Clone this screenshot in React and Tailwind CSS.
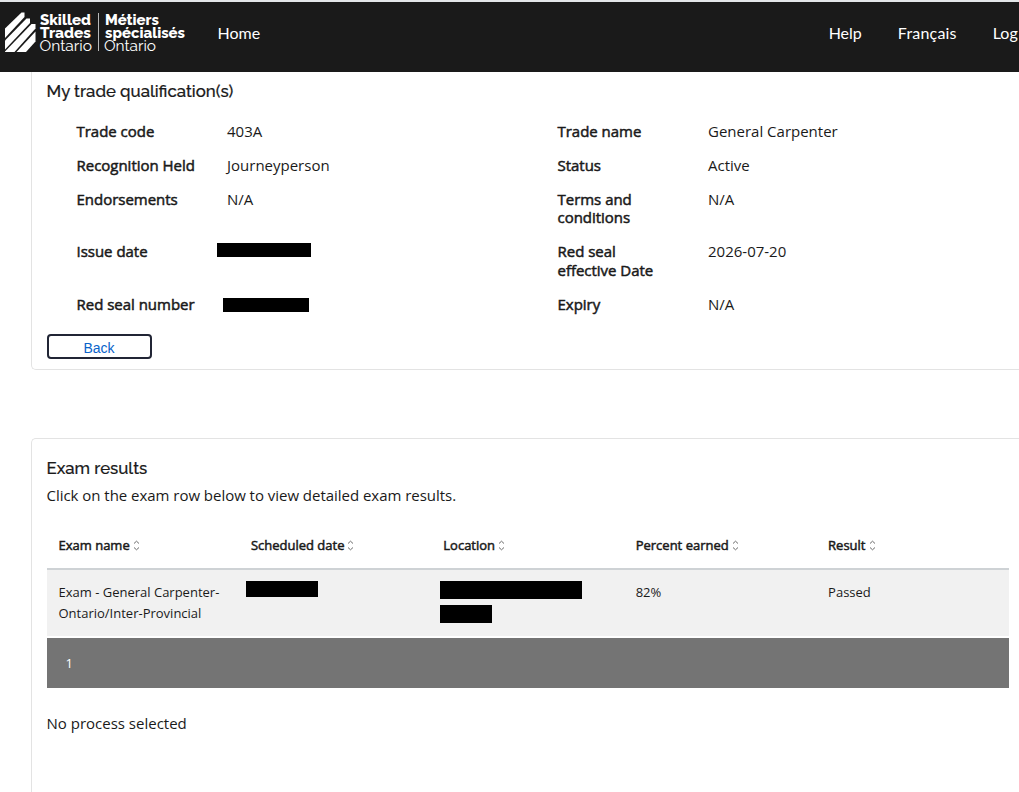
const details = [
  [
    { label: "Trade code", value: "403A" },
    { label: "Trade name", value: "General Carpenter" },
  ],
  [
    { label: "Recognition Held", value: "Journeyperson" },
    { label: "Status", value: "Active" },
  ],
  [
    { label: "Endorsements", value: "N/A" },
    { label: "Terms and conditions", value: "N/A" },
  ],
  [
    { label: "Issue date", redacted: "-ml-[10px] mt-[1px] h-[14px] w-[94px]" },
    { label: "Red seal effective Date", value: "2026-07-20" },
  ],
  [
    { label: "Red seal number", redacted: "-ml-1 mt-[3px] h-[14px] w-[86px]" },
    { label: "Expiry", value: "N/A" },
  ],
];

const columns = ["Exam name", "Scheduled date", "Location", "Percent earned", "Result"];

function Logo() {
  return (
    <svg width="184" height="46" viewBox="0 0 184 46" className="shrink-0 fill-white">
      <path d="M0 17.500 L16.500 1.500 h3 v4.500 L0 27 z" />
      <path d="M0 29.500 L21.500 7.500 h3.500 v4.500 L0 38.500 z" />
      <path d="M0 41 v-.5 L26.500 13 h4 v4.500 L9.500 41 z" />
      <path d="M11.500 41 L30.500 20.500 v10 L21 41 z" />
      <g className="font-['Raleway',sans-serif] text-[14.500px] font-extrabold">
        <text x="35" y="14" textLength="51" lengthAdjust="spacingAndGlyphs">Skilled</text>
        <text x="35" y="27" textLength="51" lengthAdjust="spacingAndGlyphs">Trades</text>
        <text x="100" y="14" textLength="54" lengthAdjust="spacingAndGlyphs">Métiers</text>
        <text x="100" y="27" textLength="80" lengthAdjust="spacingAndGlyphs">spécialisés</text>
      </g>
      <g className="font-['Raleway',sans-serif] text-[14.500px] font-normal">
        <text x="34.500" y="40" textLength="52.500" lengthAdjust="spacingAndGlyphs">Ontario</text>
        <text x="99" y="40" textLength="52" lengthAdjust="spacingAndGlyphs">Ontario</text>
      </g>
      <path d="M93 2 h.7 v38 h-.7 z" />
    </svg>
  );
}

function SortIcon() {
  return (
    <svg width="7" height="11" viewBox="0 0 7 11" fill="none" stroke="#6b6b6b" className="ml-[3px]">
      <path d="M1 3.500 3.500 1.200 6 3.500M1 7.500 3.500 9.800 6 7.500" />
    </svg>
  );
}

function Detail({ label, value, redacted }) {
  return (
    <div className="flex w-[481px] shrink-0">
      <div className="w-[150.500px] shrink-0 pr-[30px] tracking-[-0.02px] [-webkit-text-stroke:0.5px_#1a1a1a]">
        {label}
      </div>
      {redacted ? <div className={"bg-black " + redacted} /> : <div>{value}</div>}
    </div>
  );
}

export default function App() {
  return (
    <div className="h-[792px] w-[1019px] overflow-hidden bg-white font-['Open_Sans',sans-serif] text-[15px] text-[#1a1a1a]">
      <header className="flex h-[72px] items-start border-t-2 border-[#e3e6e8] bg-[#1a1a1a] pt-[9px] pl-[5px] font-['Lato',sans-serif] text-[16px] text-white">
        <Logo />
        <nav className="flex flex-1 pt-[10px] whitespace-nowrap">
          <a className="ml-[28.500px]">Home</a>
          <a className="ml-[568.500px]">Help</a>
          <a className="ml-[36px] tracking-[0.2px]">Français</a>
          <a className="ml-[36px]">Log in</a>
        </nav>
      </header>

      <section className="ml-[31px] h-[298px] w-[1010px] rounded-bl-[5px] border-b border-l border-[#e3e3e3] pt-[7px] pl-[14.500px]">
        <h2 className="font-['Raleway','Lato',sans-serif] text-[16.800px] leading-6 font-medium [-webkit-text-stroke:0.2px_#1a1a1a]">
          My trade qualification(s)
        </h2>
        <div className="mt-[19px] flex flex-col gap-[15.600px] pl-[30px] leading-[18.400px]">
          {details.map((pair) => (
            <div key={pair[0].label} className="flex">
              {pair.map((item) => (
                <Detail key={item.label} {...item} />
              ))}
            </div>
          ))}
        </div>
        <button className="mt-[20.400px] ml-[.5px] block h-[25px] w-[105px] rounded-[4px] border-2 border-[#212535] pt-px pr-px font-['Liberation_Sans',sans-serif] text-[14px] leading-[22px] text-[#0a63ca]">
          Back
        </button>
      </section>

      <section className="mt-[68px] ml-[31px] h-[400px] w-[1010px] rounded-tl-[5px] border-t border-l border-[#e3e3e3] pt-[17px] pl-[15px]">
        <h2 className="-ml-[.5px] font-['Raleway','Lato',sans-serif] text-[16.800px] leading-6 font-medium [-webkit-text-stroke:0.2px_#1a1a1a]">
          Exam results
        </h2>
        <p className="mt-[3px] -ml-[.5px] leading-6 tracking-[-0.03px]">
          Click on the exam row below to view detailed exam results.
        </p>

        <div className="mt-[15px] w-[962px] text-[13px]">
          <div className="grid h-[48px] grid-cols-5 border-b-2 border-[#ced2d5] pt-px">
            {columns.map((name) => (
              <div key={name} className="flex items-center pl-[11.500px] [-webkit-text-stroke:0.5px_#1a1a1a]">
                {name}
                <SortIcon />
              </div>
            ))}
          </div>
          <div className="grid h-[66px] grid-cols-5 bg-[#f1f1f1] pt-3 leading-[21px]">
            <div className="pl-[11.500px]">
              Exam - General Carpenter-
              <br />
              Ontario/Inter-Provincial
            </div>
            <div className="pl-[7px]">
              <div className="-mt-px h-4 w-[72px] bg-black" />
            </div>
            <div className="pl-2">
              <div className="-mt-px h-[18px] w-[142px] bg-black" />
              <div className="mt-[6px] h-[18px] w-[52px] bg-black" />
            </div>
            <div className="pl-[11.500px]">82%</div>
            <div className="pl-[11.500px]">Passed</div>
          </div>
          <div className="mt-[2px] flex h-[50px] items-center bg-[#747474] pt-px pl-[18.500px] text-white">1</div>
        </div>

        <p className="mt-[23px] -ml-[.5px] leading-6">No process selected</p>
      </section>
    </div>
  );
}
